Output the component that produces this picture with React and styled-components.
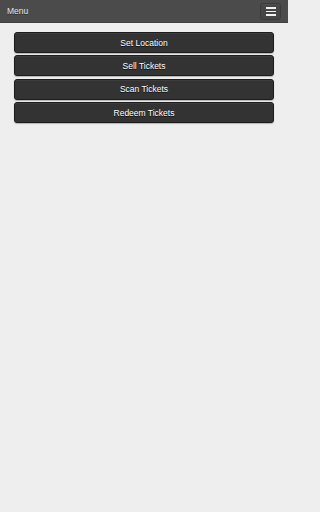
import React from "react";
import styled, { createGlobalStyle } from "styled-components";

const GlobalStyle = createGlobalStyle`
  html, body {
    margin: 0;
    padding: 0;
    background-color: #eeeeee;
    font-family: "Liberation Sans", Arial, sans-serif;
  }
`;

const Page = styled.div`
  width: 288px;
  min-height: 512px;
  background-color: #eeeeee;
`;

const Header = styled.header`
  height: 22px;
  background-color: #4b4b4b;
  border-bottom: 1px solid #404040;
  display: flex;
  align-items: center;
  justify-content: space-between;
  padding: 0 7px;
`;

const Title = styled.span`
  color: #e8e8e8;
  font-size: 8.5px;
  text-shadow: 0 1px 0 #2a2a2a;
`;

const MenuButton = styled.button`
  width: 21px;
  height: 17px;
  margin-top: 1px;
  padding: 0;
  border: 1px solid #3a3a3a;
  border-radius: 3px;
  background-color: #464646;
  box-shadow: inset 0 1px 0 rgba(255, 255, 255, 0.06);
  display: flex;
  flex-direction: column;
  align-items: center;
  justify-content: center;
  gap: 2px;
`;

const Bar = styled.span`
  width: 10px;
  height: 1.5px;
  background-color: #f2f2f2;
`;

const ButtonList = styled.nav`
  display: flex;
  flex-direction: column;
  gap: 2.4px;
  padding: 9px 14px 0;
`;

const NavButton = styled.button`
  height: 21px;
  border: 1px solid #1c1c1c;
  border-radius: 3px;
  background-color: #333333;
  box-shadow: 0 1px 1px rgba(0, 0, 0, 0.25), inset 0 1px 0 rgba(255, 255, 255, 0.05);
  color: #ffffff;
  font-family: "Liberation Sans", Arial, sans-serif;
  font-size: 8.5px;
  text-shadow: 0 1px 0 #111;
  padding: 0;
  cursor: pointer;
`;

const items = ["Set Location", "Sell Tickets", "Scan Tickets", "Redeem Tickets"];

export default function App() {
  return (
    <Page>
      <GlobalStyle />
      <Header>
        <Title>Menu</Title>
        <MenuButton aria-label="menu">
          <Bar />
          <Bar />
          <Bar />
        </MenuButton>
      </Header>
      <ButtonList>
        {items.map((label) => (
          <NavButton key={label}>{label}</NavButton>
        ))}
      </ButtonList>
    </Page>
  );
}
